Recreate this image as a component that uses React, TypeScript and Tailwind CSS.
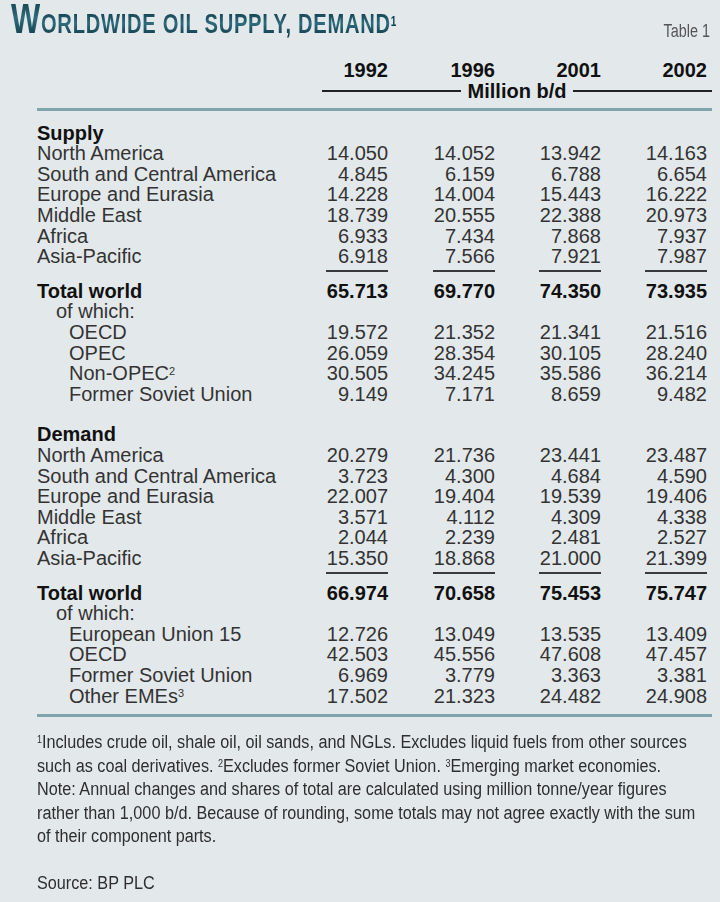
import type { ReactNode } from 'react';

// Table 1 — Worldwide oil supply, demand (million b/d)

type Row = { label: ReactNode; values: string[] };

const GRID = 'grid grid-cols-[247px_104px_107px_106px_111px]';

const supplyRows: Row[] = [
  { label: 'North America', values: ['14.050', '14.052', '13.942', '14.163'] },
  { label: 'South and Central America', values: ['4.845', '6.159', '6.788', '6.654'] },
  { label: 'Europe and Eurasia', values: ['14.228', '14.004', '15.443', '16.222'] },
  { label: 'Middle East', values: ['18.739', '20.555', '22.388', '20.973'] },
  { label: 'Africa', values: ['6.933', '7.434', '7.868', '7.937'] },
  { label: 'Asia-Pacific', values: ['6.918', '7.566', '7.921', '7.987'] },
];

const supplyOf: Row[] = [
  { label: 'OECD', values: ['19.572', '21.352', '21.341', '21.516'] },
  { label: 'OPEC', values: ['26.059', '28.354', '30.105', '28.240'] },
  {
    label: (
      <>
        Non-OPEC<sup className="text-[11px]">2</sup>
      </>
    ),
    values: ['30.505', '34.245', '35.586', '36.214'],
  },
  { label: 'Former Soviet Union', values: ['9.149', '7.171', '8.659', '9.482'] },
];

const demandRows: Row[] = [
  { label: 'North America', values: ['20.279', '21.736', '23.441', '23.487'] },
  { label: 'South and Central America', values: ['3.723', '4.300', '4.684', '4.590'] },
  { label: 'Europe and Eurasia', values: ['22.007', '19.404', '19.539', '19.406'] },
  { label: 'Middle East', values: ['3.571', '4.112', '4.309', '4.338'] },
  { label: 'Africa', values: ['2.044', '2.239', '2.481', '2.527'] },
  { label: 'Asia-Pacific', values: ['15.350', '18.868', '21.000', '21.399'] },
];

const demandOf: Row[] = [
  { label: 'European Union 15', values: ['12.726', '13.049', '13.535', '13.409'] },
  { label: 'OECD', values: ['42.503', '45.556', '47.608', '47.457'] },
  { label: 'Former Soviet Union', values: ['6.969', '3.779', '3.363', '3.381'] },
  {
    label: (
      <>
        Other EMEs<sup className="text-[11px]">3</sup>
      </>
    ),
    values: ['17.502', '21.323', '24.482', '24.908'],
  },
];

function NumCells({ values, bold }: { values: string[]; bold?: boolean }) {
  return (
    <>
      {values.map((v, i) => (
        <div
          key={i}
          className={`text-right ${i === 3 ? 'pr-[5px]' : ''} ${bold ? 'font-bold text-[#111]' : ''}`}
        >
          {v}
        </div>
      ))}
    </>
  );
}

function DataRow({ row, indent = 0 }: { row: Row; indent?: 0 | 1 | 2 }) {
  const pad = indent === 2 ? 'pl-[32px]' : indent === 1 ? 'pl-[19px]' : '';
  return (
    <div className={`${GRID} leading-[20.6px]`}>
      <div className={`whitespace-nowrap ${pad}`}>{row.label}</div>
      <NumCells values={row.values} />
    </div>
  );
}

function Heading({ children }: { children: ReactNode }) {
  return <div className="font-bold leading-[20.6px] text-[#111]">{children}</div>;
}

function SubtotalRule() {
  return (
    <div className={`${GRID} h-[14px] pt-[3px]`}>
      <div />
      {[0, 1, 2, 3].map((i) => (
        <div key={i} className={`flex justify-end ${i === 3 ? 'pr-[5px]' : ''}`}>
          <div className="h-[2px] w-[62px] bg-[#3a3a3a]" />
        </div>
      ))}
    </div>
  );
}

function Section({
  title,
  rows,
  total,
  of,
}: {
  title: string;
  rows: Row[];
  total: string[];
  of: Row[];
}) {
  return (
    <div>
      <Heading>{title}</Heading>
      {rows.map((r, i) => (
        <DataRow key={i} row={r} />
      ))}
      <SubtotalRule />
      <div className={`${GRID} leading-[20.6px]`}>
        <div className="font-bold text-[#111]">Total world</div>
        <NumCells values={total} bold />
      </div>
      <div className="pl-[19px] leading-[20.6px]">of which:</div>
      {of.map((r, i) => (
        <DataRow key={i} row={r} indent={2} />
      ))}
    </div>
  );
}

// condensed type: no narrow face is installed, so squeeze Liberation Sans per line
function Note({ children }: { children: ReactNode }) {
  return (
    <div>
      <span className="inline-block origin-left scale-x-[0.9] whitespace-nowrap">{children}</span>
    </div>
  );
}

export default function App() {
  return (
    <div className="min-h-[902px] w-[720px] overflow-hidden bg-[#e3e9eb] font-['Liberation_Sans',Arial,sans-serif] text-[20px] text-[#333]">
      {/* Title bar */}
      <div className="flex h-[60px] items-start justify-between pl-[11px] pr-[10px]">
        <div className="inline-block origin-left scale-x-[0.72] whitespace-nowrap font-bold leading-[36px] tracking-[1px] text-[#0f4352]">
          <span className="bg-linear-to-b from-[#0a3240] via-[#2f6c7c] to-[#0a3240] bg-clip-text text-[43px] text-transparent">
            W
          </span>
          <span className="bg-linear-to-b from-[#0a3240] via-[#2f6c7c] to-[#0a3240] bg-clip-text text-[28px] text-transparent">
            ORLDWIDE OIL SUPPLY, DEMAND
          </span>
          <sup className="text-[14px] text-[#0f4352]">1</sup>
        </div>
        <div className="mt-[21px] origin-right scale-x-[0.8] text-[18px] leading-[20px] text-[#555]">
          Table 1
        </div>
      </div>

      {/* Table */}
      <div className="pl-[37px] pr-[8px]">
        <div className={`${GRID} font-bold leading-[20.6px] text-[#111]`}>
          <div />
          <NumCells values={['1992', '1996', '2001', '2002']} bold />
        </div>
        <div className={`${GRID} leading-[20.6px]`}>
          <div />
          <div className="col-span-4 flex items-center pl-[38px]">
            <div className="h-[2px] flex-1 bg-[#222]" />
            <span className="px-[7px] font-bold text-[#111]">Million b/d</span>
            <div className="h-[2px] flex-1 bg-[#222]" />
          </div>
        </div>
        <div className="mb-[12px] mt-[6.5px] h-[3px] bg-[#80a5ac]" />

        <Section
          title="Supply"
          rows={supplyRows}
          total={['65.713', '69.770', '74.350', '73.935']}
          of={supplyOf}
        />
        <div className="h-[20px]" />
        <Section
          title="Demand"
          rows={demandRows}
          total={['66.974', '70.658', '75.453', '75.747']}
          of={demandOf}
        />

        <div className="mb-[14px] mt-[8px] h-[3px] bg-[#80a5ac]" />

        {/* Footnotes */}
        <div className="text-[18px] leading-[23.5px] text-[#2e2e2e]">
          <Note>
            <sup className="text-[10px]">1</sup>Includes crude oil, shale oil, oil sands, and NGLs. Excludes liquid fuels from other sources
          </Note>
          <Note>
            such as coal derivatives. <sup className="text-[10px]">2</sup>Excludes former Soviet Union.{' '}
            <sup className="text-[10px]">3</sup>Emerging market economies.
          </Note>
          <Note>Note: Annual changes and shares of total are calculated using million tonne/year figures</Note>
          <Note>rather than 1,000 b/d. Because of rounding, some totals may not agree exactly with the sum</Note>
          <Note>of their component parts.</Note>
          <div className="h-[23.5px]" />
          <Note>Source: BP PLC</Note>
        </div>
      </div>
    </div>
  );
}
